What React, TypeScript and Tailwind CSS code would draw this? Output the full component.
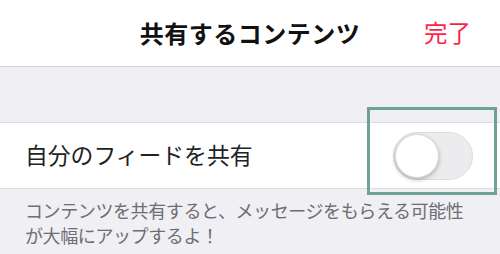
export default function App() {
  return (
    <div
      className="relative w-[500px] h-[254px] overflow-hidden bg-[#efeff4]"
      style={{ fontFamily: '"Noto Sans CJK JP", "Noto Sans", sans-serif' }}
    >
      {/* nav bar */}
      <div className="grid grid-cols-[1fr_auto_1fr] items-center h-[67px] bg-white border-b border-[#d6d6da]">
        <div />
        <div className="text-[24px] font-bold text-[#111] tracking-[0.5px]">共有するコンテンツ</div>
        <div className="flex justify-end pr-[29px]">
          <span className="text-[23.5px] text-[#ff1f44]">完了</span>
        </div>
      </div>

      <div className="h-[55px]" />

      {/* setting row */}
      <div className="flex items-center justify-between h-[67px] bg-white border-y border-[#dcdce0] pl-[25px] pr-[27px]">
        <span className="text-[22.8px] text-[#222] leading-none">自分のフィードを共有</span>
        <div className="relative w-[80px] h-[48px] rounded-full bg-[#ececee] border border-[#dedee2]">
          <div className="absolute left-[1px] top-[1px] w-[44px] h-[44px] rounded-full bg-white shadow-[0_2px_4px_rgba(0,0,0,0.25)] border border-[#d8d8da]" />
        </div>
      </div>

      {/* footer note */}
      <div className="pl-[25px] pr-[20px] pt-[9px] text-[18px] leading-[25px] text-[#6d6d72] tracking-[-0.4px]">
        コンテンツを共有すると、メッセージをもらえる可能性
        <br />
        が大幅にアップするよ！
      </div>

      {/* highlight box */}
      <div className="absolute left-[367px] top-[107px] w-[130px] h-[88px] border-[3px] border-[#6fa198]" />
    </div>
  );
}
